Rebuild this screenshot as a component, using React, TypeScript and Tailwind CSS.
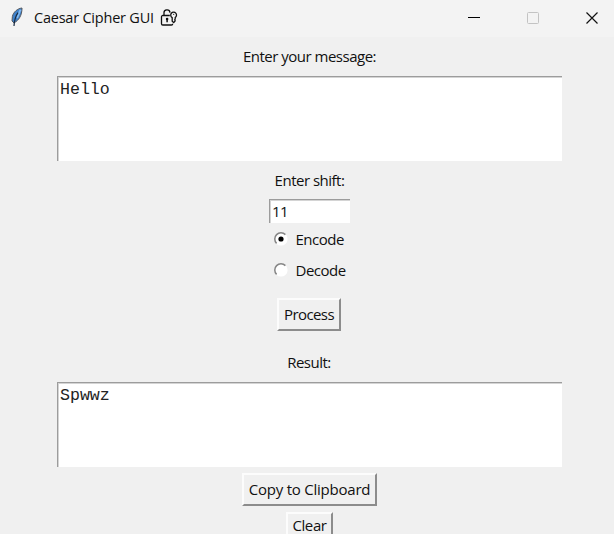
import React from "react";

const ui = "font-['Open_Sans','Noto_Sans',sans-serif] text-[#111] whitespace-nowrap";

function Label({ children, className }: { children: React.ReactNode; className: string }) {
  return <div className={`${ui} h-5 text-[15px] leading-5 ${className}`}>{children}</div>;
}

function TextBox({ children }: { children: React.ReactNode }) {
  return (
    <div className="h-[85px] w-[505px] border-l border-t border-[#9c9c9c] bg-white pl-[2px] pt-[3px] font-['Liberation_Mono',monospace] text-[16.6px] leading-[19px] text-[#222] shadow-[inset_1px_1px_0_#d4d4d4]">
      {children}
    </div>
  );
}

function Button({ children, className, text }: { children: React.ReactNode; className: string; text: string }) {
  return (
    <button
      className={`${ui} flex shrink-0 items-center justify-center border-2 border-b-[#8c8c8c] border-l-[#fcfcfc] border-r-[#8c8c8c] border-t-[#fcfcfc] bg-[#f0f0f0] pb-[2px] text-[15px] leading-5 ${className}`}
    >
      <span className={text}>{children}</span>
    </button>
  );
}

function Radio({ checked, label, text }: { checked?: boolean; label: string; text: string }) {
  return (
    <div className="flex h-[31px] w-[74px] items-center">
      <svg width="16" height="16" viewBox="0 0 16 16" className="shrink-0">
        <circle cx="8" cy="8" r="6.6" fill="#fff" />
        <path d="M3.6 12.4A6.2 6.2 0 1 1 12.4 3.6" fill="none" stroke="#858585" strokeWidth="1.5" />
        {checked && <circle cx="8" cy="8" r="2.6" fill="#000" />}
      </svg>
      <span className={`${ui} ml-[7px] text-[15px] leading-5 ${text}`}>{label}</span>
    </div>
  );
}

function Feather() {
  return (
    <svg width="14" height="20" viewBox="0 0 14 20">
      <path d="M12 1C7.5 1.5 3.4 5 2.4 9.4L2 14l2 1.9C8.8 13.4 12 8.5 12 1Z" fill="#3f82cb" stroke="#55595f" strokeWidth="1" />
      <path d="M10.6 2.8C9.2 5 8.8 7.5 7 11" fill="none" stroke="#83baf0" strokeWidth="1.8" />
      <path d="M8 5.6C6 8.5 4.3 12 4 19" fill="none" stroke="#192a40" strokeWidth="1.2" />
    </svg>
  );
}

function LockKey() {
  return (
    <svg width="18" height="18" viewBox="0 0 18 18" fill="none" stroke="#111" strokeWidth="1.3" strokeLinejoin="round">
      <path d="M9.8 6.5H2.8a1.3 1.3 0 0 0-1.3 1.3v6.9A1.3 1.3 0 0 0 2.8 16h8.6a1.3 1.3 0 0 0 1.3-1.3" />
      <path d="M4 6.5V4.2a3 3 0 0 1 6-.6" />
      <path d="M12.2 8.6A2.9 2.9 0 1 1 15.2 8.5V10l-.5.9.5.9-1.5 1.8-1.5-1.4Z" />
      <circle cx="13.7" cy="5.3" r=".6" fill="#111" stroke="none" />
      <path d="M7.1 9.2v4" strokeWidth="1.5" />
      <circle cx="7.1" cy="10" r="1.3" fill="#111" stroke="none" />
    </svg>
  );
}

export default function App() {
  return (
    <div className="flex h-[534px] w-[614px] flex-col overflow-hidden bg-[#f0f0f0]">
      <header className="flex h-[37px] shrink-0 items-start bg-[#f3f3f3]">
        <div className="ml-[10px] mt-[7px]"><Feather /></div>
        <div className={`${ui} ml-[10px] mt-[8px] w-[120px] text-[14.5px] leading-5 tracking-[-0.22px]`}>Caesar Cipher GUI</div>
        <div className="ml-[6px] mt-[9px]"><LockKey /></div>
        <div className="ml-auto mr-[15px] mt-[11px] flex gap-[45px]">
          <svg width="14" height="14"><path d="M1 6.5h12" stroke="#000" /></svg>
          <svg width="14" height="14"><rect x="1.5" y="1.5" width="11" height="11" rx="1" fill="none" stroke="#c3c3c3" /></svg>
          <svg width="14" height="14"><path d="m1.5 1.5 11 11m0-11-11 11" stroke="#111" strokeWidth="1.2" /></svg>
        </div>
      </header>
      <main className="flex flex-1 flex-col items-center pl-[5px]">
        <Label className="mt-[9px] tracking-[-0.5px]">Enter your message:</Label>
        <div className="mt-[10px]"><TextBox>Hello</TextBox></div>
        <Label className="mt-[9px] tracking-[-0.5px]">Enter shift:</Label>
        <div className={`${ui} mt-[9px] h-6 w-[81px] border-l border-t border-[#9c9c9c] bg-white pl-[2px] text-[15px] leading-[23px] tracking-[-0.7px] shadow-[inset_1px_1px_0_#d4d4d4]`}>11</div>
        <div>
          <Radio checked label="Encode" text="tracking-[-0.5px]" />
          <Radio label="Decode" text="tracking-[-0.5px]" />
        </div>
        <Button className="mr-px mt-[13px] h-[33px] w-[64px]" text="tracking-[-0.6px]">Process</Button>
        <Label className="mr-px mt-[21px] tracking-[-0.5px]">Result:</Label>
        <div className="mt-[10px]"><TextBox>Spwwz</TextBox></div>
        <Button className="mt-[6px] h-[33px] w-[135px]" text="tracking-[-0.22px]">Copy to Clipboard</Button>
        <Button className="mt-[6px] h-[28px] w-[47px]" text="tracking-[-0.4px]">Clear</Button>
      </main>
    </div>
  );
}
